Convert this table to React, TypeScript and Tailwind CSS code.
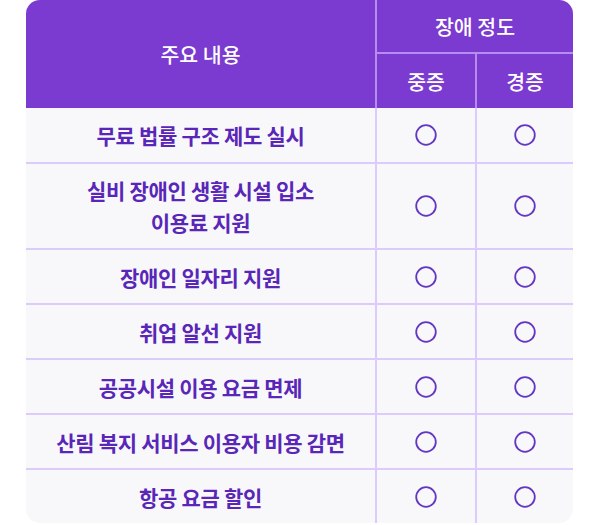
import React from 'react';

interface Benefit {
  label: string[];
  severe: boolean;
  mild: boolean;
}

const benefits: Benefit[] = [
  { label: ['무료 법률 구조 제도 실시'], severe: true, mild: true },
  { label: ['실비 장애인 생활 시설 입소', '이용료 지원'], severe: true, mild: true },
  { label: ['장애인 일자리 지원'], severe: true, mild: true },
  { label: ['취업 알선 지원'], severe: true, mild: true },
  { label: ['공공시설 이용 요금 면제'], severe: true, mild: true },
  { label: ['산림 복지 서비스 이용자 비용 감면'], severe: true, mild: true },
  { label: ['항공 요금 할인'], severe: true, mild: true },
];

const Mark: React.FC = () => (
  <svg width="22" height="22" viewBox="0 0 22 22" fill="none">
    <circle cx="11" cy="11" r="9.8" stroke="#6337c2" strokeWidth="1.8" />
  </svg>
);

export default function App() {
  return (
    <div
      className="w-[600px] h-[525px] bg-white pl-[26px]"
      style={{ fontFamily: '"Noto Sans CJK KR", "Noto Sans", sans-serif' }}
    >
      <div className="w-[547px] rounded-[14px] overflow-hidden bg-[#f8f8fb]">
        {/* header */}
        <div className="flex h-[108px] bg-[#7b3ad0] text-white text-[20.5px] font-medium">
          <div className="w-[349px] flex items-center justify-center">주요 내용</div>
          <div className="flex-1 flex flex-col border-l-2 border-[#b68cf0]">
            <div className="h-[52px] flex items-center justify-center">장애 정도</div>
            <div className="flex-1 flex border-t-2 border-[#b68cf0]">
              <div className="w-[98px] flex items-center justify-center">중증</div>
              <div className="flex-1 flex items-center justify-center border-l-2 border-[#b68cf0]">경증</div>
            </div>
          </div>
        </div>

        {/* rows */}
        {benefits.map((b, i) => (
          <div
            key={i}
            className={`flex text-[#5a26b8] text-[21px] font-semibold ${
              i === 0 ? 'h-[54px]' : 'border-t-2 border-[#dccbfc]'
            } ${i === 1 ? 'h-[86px]' : i === 0 ? '' : 'h-[55px]'}`}
          >
            <div className="w-[349px] flex flex-col items-center justify-center leading-[32px] tracking-[-0.3px]">
              {b.label.map((l) => (
                <span key={l}>{l}</span>
              ))}
            </div>
            <div className="w-[100px] flex items-center justify-center border-l-2 border-[#dccbfc]">
              {b.severe && <Mark />}
            </div>
            <div className="flex-1 flex items-center justify-center border-l-2 border-[#dccbfc]">
              {b.mild && <Mark />}
            </div>
          </div>
        ))}
      </div>
    </div>
  );
}
